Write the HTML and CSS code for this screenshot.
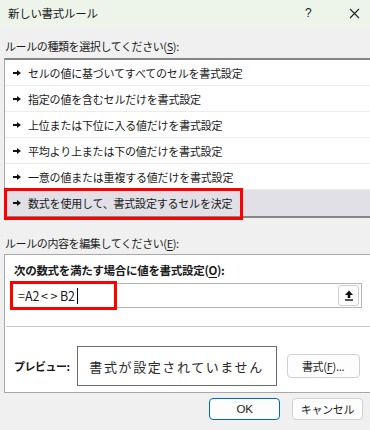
FILE: index.html
```html
<!DOCTYPE html>
<html lang="ja">
<head>
    <meta charset="UTF-8">
    <title>新しい書式ルール</title>
    <link rel="stylesheet" href="styles.css">
</head>
<body>
    <div class="titlebar">
        <span class="title">新しい書式ルール</span>
        <span class="help">?</span>
        <span class="close">
            <svg width="11" height="11" viewBox="0 0 11 11"><path d="M1 1L10 10M10 1L1 10" stroke="#222" stroke-width="1.1" fill="none"/></svg>
        </span>
    </div>

    <div class="content">
        <div class="label">ルールの種類を選択してください(<u>S</u>):</div>
        <ul class="rule-list">
            <li><svg class="arrow" width="8" height="6" viewBox="0 0 8 6"><path d="M0 2H4V0L8 3L4 6V4H0Z" fill="#111"/></svg>セルの値に基づいてすべてのセルを書式設定</li>
            <li><svg class="arrow" width="8" height="6" viewBox="0 0 8 6"><path d="M0 2H4V0L8 3L4 6V4H0Z" fill="#111"/></svg>指定の値を含むセルだけを書式設定</li>
            <li><svg class="arrow" width="8" height="6" viewBox="0 0 8 6"><path d="M0 2H4V0L8 3L4 6V4H0Z" fill="#111"/></svg>上位または下位に入る値だけを書式設定</li>
            <li><svg class="arrow" width="8" height="6" viewBox="0 0 8 6"><path d="M0 2H4V0L8 3L4 6V4H0Z" fill="#111"/></svg>平均より上または下の値だけを書式設定</li>
            <li><svg class="arrow" width="8" height="6" viewBox="0 0 8 6"><path d="M0 2H4V0L8 3L4 6V4H0Z" fill="#111"/></svg>一意の値または重複する値だけを書式設定</li>
            <li class="selected"><svg class="arrow" width="8" height="6" viewBox="0 0 8 6"><path d="M0 2H4V0L8 3L4 6V4H0Z" fill="#111"/></svg>数式を使用して、書式設定するセルを決定<div class="mark mark-list"></div></li>
        </ul>

        <div class="label label-edit">ルールの内容を編集してください(<u>E</u>):</div>
        <div class="group">
            <div class="bold-label">次の数式を満たす場合に値を書式設定(<u>O</u>):</div>
            <div class="formula">
                <span class="formula-text">=A2<span class="op">&lt;&gt;</span>B2</span><span class="caret"></span>
                <span class="ref-btn">
                    <svg width="10" height="11" viewBox="0 0 10 11"><path d="M5 0.5L9 5H6.3V8H3.7V5H1Z" fill="#111"/><rect x="1" y="9.3" width="8" height="1.4" fill="#111"/></svg>
                </span>
                <div class="mark mark-formula"></div>
            </div>
            <div class="separator"></div>
            <div class="preview-row">
                <span class="bold-label preview-label">プレビュー:</span>
                <div class="preview-box">書式が設定されていません</div>
                <span class="button format-btn">書式(<u>F</u>)...</span>
            </div>
        </div>

        <div class="footer">
            <span class="button ok-btn">OK</span>
            <span class="button">キャンセル</span>
        </div>
    </div>
</body>
</html>
```

FILE: styles.css
```css
body {
    margin: 0;
    width: 370px;
    height: 430px;
    overflow: hidden;
    background-color: #f0f0f0;
    font-family: "Noto Sans CJK JP", "Noto Sans", sans-serif;
    font-size: 11px;
    color: #1a1a1a;
}

u {
    text-decoration: underline;
    text-underline-offset: 2px;
}

.titlebar {
    display: flex;
    align-items: center;
    height: 26px;
    background-color: #edf4ea;
    padding-left: 8px;
}

.title {
    flex: 1;
    font-size: 11.5px;
    letter-spacing: -0.3px;
}

.help {
    width: 10px;
    margin-right: 34px;
    font-family: "Liberation Sans", sans-serif;
    font-size: 12px;
}

.close {
    display: flex;
    margin-right: 10px;
}

.content {
    padding-left: 4px;
}

.label {
    height: 16px;
    line-height: 16px;
    margin-top: 12px;
    padding-left: 1px;
    letter-spacing: -0.4px;
}

.label-edit {
    margin-top: 17px;
}

.rule-list {
    list-style: none;
    margin: 4px -10px 0 0;
    padding: 0;
    background-color: #fff;
    border-top: 2px solid #858585;
    border-bottom: 2px solid #858585;
    border-left: 1px solid #a8a8a8;
}

.rule-list li {
    position: relative;
    display: flex;
    align-items: center;
    height: 25px;
    border-bottom: 1px solid #ececec;
    padding-left: 8px;
    letter-spacing: -0.2px;
}

.rule-list li.selected {
    height: 26px;
    border-bottom: none;
    background-color: #e0e0e6;
}

.arrow {
    margin-right: 7px;
}

.mark {
    position: absolute;
    box-sizing: border-box;
    border: 3px solid #ff0000;
}

.mark-list {
    left: -1px;
    top: -2px;
    width: 239px;
    height: 32px;
}

.group {
    margin: 3px -10px 0 0;
    padding: 7px 0 6px 7px;
    background-color: #fff;
    border: 1px solid #a8a8a8;
}

.bold-label {
    display: block;
    height: 16px;
    line-height: 16px;
    font-size: 11.5px;
    font-weight: bold;
    letter-spacing: -0.3px;
    padding-left: 2px;
}

.preview-label {
    font-size: 11px;
    letter-spacing: -0.5px;
    margin-right: 7px;
}

.formula {
    position: relative;
    display: flex;
    align-items: center;
    box-sizing: border-box;
    width: 350px;
    height: 25px;
    margin-top: 5px;
    padding-left: 5px;
    border: 1px solid #b4b4b4;
}

.formula-text {
    font-size: 12.5px;
}

.op {
    letter-spacing: 2.5px;
    padding-left: 1.5px;
}

.caret {
    width: 1px;
    height: 16px;
    margin-left: 2px;
    background-color: #000;
}

.ref-btn {
    display: flex;
    align-items: center;
    justify-content: center;
    margin-left: auto;
    margin-right: 2px;
    width: 19px;
    height: 19px;
    border: 1px solid #cfcfcf;
    border-radius: 3px;
    background-color: #fdfdfd;
}

.mark-formula {
    left: -3px;
    top: -3px;
    width: 107px;
    height: 29px;
}

.separator {
    height: 1px;
    margin: 18px 0 0 -6px;
    background-color: #c9c9c9;
}

.preview-row {
    display: flex;
    align-items: center;
    margin-top: 19px;
}

.preview-box {
    display: flex;
    align-items: center;
    justify-content: center;
    box-sizing: border-box;
    width: 200px;
    height: 40px;
    border: 1px solid #6c6c6c;
    font-size: 13px;
    letter-spacing: 1.6px;
    color: #2a2a2a;
}

.button {
    display: flex;
    align-items: center;
    justify-content: center;
    box-sizing: border-box;
    width: 71px;
    height: 22px;
    border: 1px solid #d0d0d0;
    border-radius: 4px;
    background-color: #fdfdfd;
    letter-spacing: -0.3px;
}

.format-btn {
    width: 73px;
    height: 24px;
    margin-left: 10px;
}

.footer {
    display: flex;
    justify-content: flex-end;
    gap: 12px;
    margin-top: 5px;
    padding-right: 7px;
}

.ok-btn {
    border-color: #0067c0;
    font-family: "Liberation Sans", sans-serif;
    font-size: 11.5px;
}
```
